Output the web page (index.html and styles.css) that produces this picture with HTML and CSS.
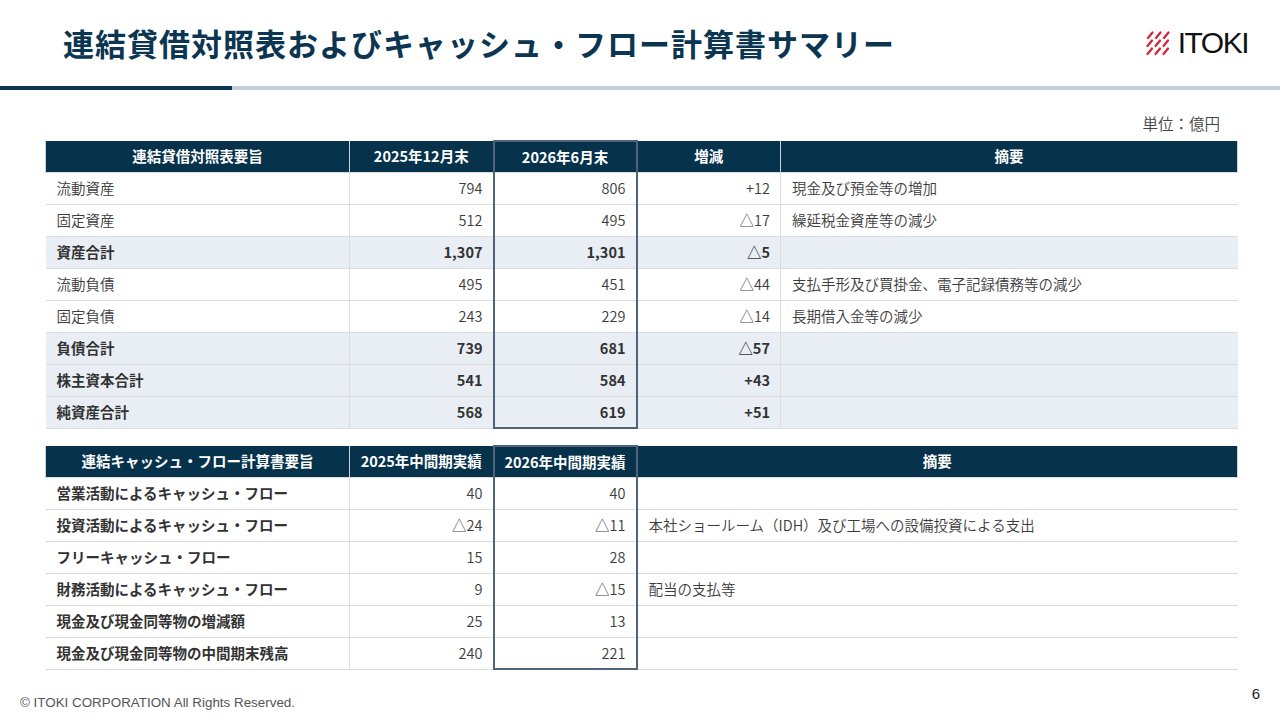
FILE: index.html
```html
<!DOCTYPE html>
<html lang="ja">
<head>
<meta charset="utf-8">
<link rel="stylesheet" href="styles.css">
</head>
<body>
<div class="page">
  <header class="head">
    <h1 class="title">連結貸借対照表およびキャッシュ・フロー計算書サマリー</h1>
    <div class="logo">
      <svg class="logo-mark" width="26" height="25" viewBox="0 0 26 25">
        <g stroke="#d2233c" stroke-width="2.2" stroke-linecap="round">
          <line x1="2" y1="7" x2="6.5" y2="1.5"/><line x1="10" y1="7" x2="14.5" y2="1.5"/><line x1="18" y1="7" x2="22.5" y2="1.5"/>
          <line x1="1.5" y1="15" x2="6" y2="9.5"/><line x1="9.5" y1="15" x2="14" y2="9.5"/><line x1="17.5" y1="15" x2="22" y2="9.5"/>
          <line x1="1.5" y1="23" x2="6" y2="17.5"/><line x1="9.5" y1="23" x2="14" y2="17.5"/><line x1="17.5" y1="23" x2="22" y2="17.5"/>
        </g>
      </svg>
      <span class="logo-text">ITOKI</span>
    </div>
  </header>
  <div class="rule"><div class="rule-dark"></div></div>

  <main class="main">
    <div class="unit">単位：億円</div>

    <table class="tbl">
      <colgroup><col class="c1"><col class="c2"><col class="c3"><col class="c4"><col class="c5"></colgroup>
      <thead>
        <tr><th>連結貸借対照表要旨</th><th>2025年12月末</th><th class="hl">2026年6月末</th><th>増減</th><th>摘要</th></tr>
      </thead>
      <tbody>
        <tr><td>流動資産</td><td class="num">794</td><td class="num hl">806</td><td class="num">+12</td><td>現金及び預金等の増加</td></tr>
        <tr><td>固定資産</td><td class="num">512</td><td class="num hl">495</td><td class="num">△17</td><td>繰延税金資産等の減少</td></tr>
        <tr class="sum"><td>資産合計</td><td class="num">1,307</td><td class="num hl">1,301</td><td class="num">△5</td><td></td></tr>
        <tr><td>流動負債</td><td class="num">495</td><td class="num hl">451</td><td class="num">△44</td><td>支払手形及び買掛金、電子記録債務等の減少</td></tr>
        <tr><td>固定負債</td><td class="num">243</td><td class="num hl">229</td><td class="num">△14</td><td>長期借入金等の減少</td></tr>
        <tr class="sum"><td>負債合計</td><td class="num">739</td><td class="num hl">681</td><td class="num">△57</td><td></td></tr>
        <tr class="sum"><td>株主資本合計</td><td class="num">541</td><td class="num hl">584</td><td class="num">+43</td><td></td></tr>
        <tr class="sum last"><td>純資産合計</td><td class="num">568</td><td class="num hl">619</td><td class="num">+51</td><td></td></tr>
      </tbody>
    </table>

    <table class="tbl tbl2">
      <colgroup><col class="c1"><col class="c2"><col class="c3"><col class="c45"></colgroup>
      <thead>
        <tr><th>連結キャッシュ・フロー計算書要旨</th><th>2025年中間期実績</th><th class="hl">2026年中間期実績</th><th>摘要</th></tr>
      </thead>
      <tbody class="bold-first">
        <tr><td>営業活動によるキャッシュ・フロー</td><td class="num">40</td><td class="num hl">40</td><td></td></tr>
        <tr><td>投資活動によるキャッシュ・フロー</td><td class="num">△24</td><td class="num hl">△11</td><td>本社ショールーム（IDH）及び工場への設備投資による支出</td></tr>
        <tr><td>フリーキャッシュ・フロー</td><td class="num">15</td><td class="num hl">28</td><td></td></tr>
        <tr><td>財務活動によるキャッシュ・フロー</td><td class="num">9</td><td class="num hl">△15</td><td>配当の支払等</td></tr>
        <tr><td>現金及び現金同等物の増減額</td><td class="num">25</td><td class="num hl">13</td><td></td></tr>
        <tr class="last"><td>現金及び現金同等物の中間期末残高</td><td class="num">240</td><td class="num hl">221</td><td></td></tr>
      </tbody>
    </table>
  </main>

  <footer class="foot">
    <span class="copy">© ITOKI CORPORATION All Rights Reserved.</span>
    <span class="pnum">6</span>
  </footer>
</div>
</body>
</html>
```

FILE: styles.css
```css
* { box-sizing: border-box; }
html, body { margin: 0; padding: 0; background: #fff; }
body { font-family: "Noto Sans CJK JP", "Noto Sans", sans-serif; color: #3a3a3a; }

.page {
  width: 1280px;
  height: 720px;
  display: flex;
  flex-direction: column;
  overflow: hidden;
}

.head {
  height: 86px;
  display: flex;
  align-items: center;
  justify-content: space-between;
  padding: 0 32px 2px 63px;
}
.title {
  margin: 0;
  font-size: 31px;
  font-weight: 700;
  letter-spacing: 1px;
  color: #0b3550;
  line-height: 1;
}
.logo {
  display: flex;
  align-items: center;
  gap: 6px;
  margin-top: 2px;
}
.logo-mark { display: block; }
.logo-text {
  font-family: "Liberation Sans", Arial, sans-serif;
  font-size: 30px;
  font-weight: 400;
  color: #111;
  letter-spacing: -1.5px;
  line-height: 1;
}

.rule {
  height: 4px;
  background: #c3ced8;
}
.rule-dark {
  width: 232px;
  height: 4px;
  background: #0b3550;
}

.main {
  padding: 23px 43px 0 45px;
  display: flex;
  flex-direction: column;
}
.unit {
  align-self: flex-end;
  font-size: 15.5px;
  font-weight: 350;
  color: #444;
  line-height: 20px;
  margin-right: 17px;
  margin-bottom: 7px;
}

.tbl {
  width: 1192px;
  border-collapse: collapse;
  table-layout: fixed;
  font-size: 14.5px;
}
.tbl2 { margin-top: 16px; }
.c1 { width: 304px; }
.c2 { width: 144px; }
.c3 { width: 143px; }
.c4 { width: 144px; }
.c5 { width: 457px; }
.c45 { width: 601px; }

.tbl th {
  height: 31px;
  padding: 0 6px;
  background: #06324b;
  color: #fff;
  font-weight: 700;
  text-align: center;
  line-height: 1;
  border-left: 1px solid #c8d3dd;
  border-right: 1px solid #c8d3dd;
  white-space: nowrap;
}
.tbl td {
  height: 32px;
  padding: 0 11px;
  line-height: 1;
  font-weight: 350;
  border: 1px solid #dcdcdc;
  white-space: nowrap;
  color: #3c3c3c;
}
.tbl td:first-child { border-left: none; }
.tbl td:last-child { border-right: none; }
.tbl td.num { text-align: right; padding-right: 10px; }

.tbl tr.sum td { background: #e8eef4; font-weight: 700; color: #333; }
.bold-first td:first-child { font-weight: 700; color: #333; }

.tbl th.hl {
  border-left: 2px solid #4f6379;
  border-right: 2px solid #4f6379;
  border-top: 2px solid #4f6379;
}
.tbl td.hl {
  border-left: 2px solid #4f6379;
  border-right: 2px solid #4f6379;
}
.tbl tr.last td.hl { border-bottom: 2px solid #4f6379; }

.foot {
  margin-top: auto;
  height: 44px;
  display: flex;
  justify-content: space-between;
  align-items: flex-start;
  padding: 0 20px 0 20px;
}
.copy {
  font-family: "Liberation Sans", Arial, sans-serif;
  font-size: 13.4px;
  color: #555;
  padding-top: 19px;
}
.pnum {
  font-family: "Liberation Sans", Arial, sans-serif;
  font-size: 15px;
  color: #222;
  padding-top: 9px;
}
```
